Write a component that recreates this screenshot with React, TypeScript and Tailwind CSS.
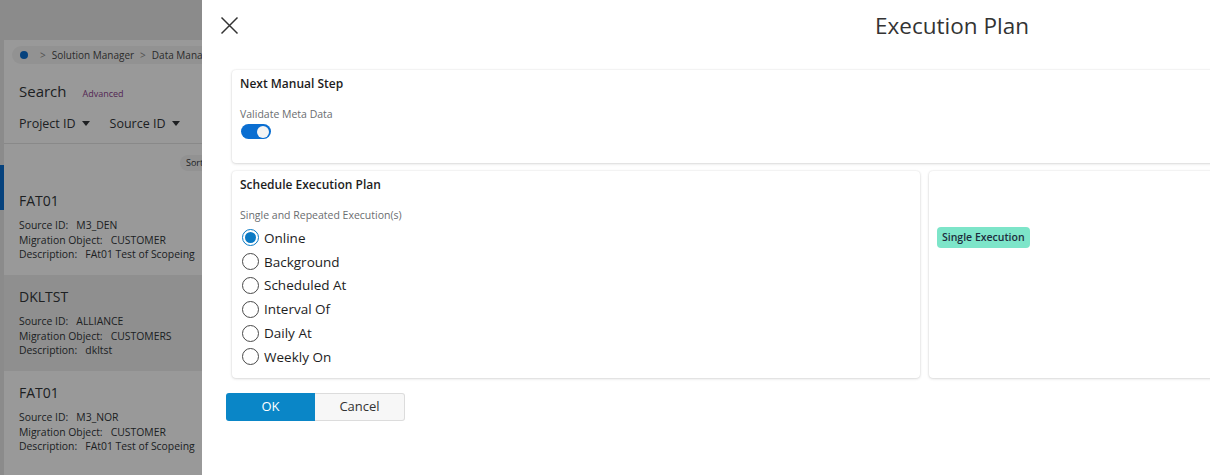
import React from 'react';

const font = { fontFamily: '"Open Sans", "Noto Sans", sans-serif' };

const items = [
  { id: 'FAT01', source: 'M3_DEN', object: 'CUSTOMER', desc: 'FAt01 Test of Scopeing', active: true },
  { id: 'DKLTST', source: 'ALLIANCE', object: 'CUSTOMERS', desc: 'dkltst', selected: true },
  { id: 'FAT01', source: 'M3_NOR', object: 'CUSTOMER', desc: 'FAt01 Test of Scopeing' },
];

const options = ['Online', 'Background', 'Scheduled At', 'Interval Of', 'Daily At', 'Weekly On'];

function Caret() {
  return <span className="ml-[6px] inline-block border-x-[4px] border-t-[5px] border-x-transparent border-t-[#32363a] align-middle" />;
}

function BackgroundPage() {
  return (
    <div className="flex h-full w-full flex-col bg-[#e8e8e8]">
      <div className="h-[40px] shrink-0" />
      <div className="flex min-h-0 flex-1">
        <div className="w-[4px] shrink-0 bg-[#e8e8e8]" />
        <div className="flex-1 bg-white text-[#32363a]">
          {/* breadcrumb */}
          <div className="ml-[8px] mt-[6px] flex h-[18px] items-center gap-[6px] rounded-full bg-[#f4f4f4] pl-[8px] text-[10px] text-[#4a4a4a]">
            <span className="h-[8px] w-[8px] rounded-full bg-[#0a6ed1]" />
            <span className="ml-[6px] text-[#888]">&gt;</span>
            <span>Solution Manager</span>
            <span className="text-[#888]">&gt;</span>
            <span className="whitespace-nowrap">Data Management</span>
          </div>
          <div className="mt-[16px] flex items-baseline gap-[16px] pl-[15px]">
            <span className="text-[15px]">Search</span>
            <span className="text-[9px] text-[#8d3f8d]">Advanced</span>
          </div>
          <div className="mt-[12px] flex items-center gap-[20px] pl-[15px] text-[12.5px]">
            <span className="flex items-center">Project ID<Caret /></span>
            <span className="flex items-center">Source ID<Caret /></span>
          </div>
          <div className="mt-[10px] border-t border-[#e4e4e4]" />
          <div className="relative">
            <span className="absolute left-[176px] top-[11px] rounded-l-full bg-[#f4f4f4] py-[1px] pl-[6px] pr-[10px] text-[9px]">Sort</span>
          </div>
          <div className="pt-[35px]">
            {items.map((it, i) => (
              <div key={i} className={`relative h-[96px] pl-[15px] pt-[12px] ${it.selected ? 'bg-[#eeeeee]' : ''}`}>
                {it.active && <span className="absolute -left-[4px] -top-[14px] h-[45px] w-[4px] bg-[#0a6ed1]" />}
                <div className="text-[14px] leading-[20px]">{it.id}</div>
                <div className="mt-[7px] text-[10.4px] leading-[14.5px]">
                  <div className="whitespace-nowrap">Source ID:&nbsp;&nbsp; {it.source}</div>
                  <div className="whitespace-nowrap">Migration Object:&nbsp;&nbsp; {it.object}</div>
                  <div className="whitespace-nowrap">Description:&nbsp;&nbsp; {it.desc}</div>
                </div>
              </div>
            ))}
          </div>
        </div>
      </div>
    </div>
  );
}

function Radio({ checked }: { checked?: boolean }) {
  if (checked) {
    return (
      <span className="flex h-[17px] w-[17px] shrink-0 items-center justify-center rounded-full border-[1.5px] border-[#0a7ac4] bg-white">
        <span className="h-[11px] w-[11px] rounded-full bg-[#0a7ac4]" />
      </span>
    );
  }
  return <span className="h-[17px] w-[17px] shrink-0 rounded-full border border-[#4a4a4a] bg-white" />;
}

function Card({ children, className = '' }: { children: React.ReactNode; className?: string }) {
  return (
    <div className={`rounded-[4px] bg-white shadow-[0_0_2px_rgba(0,0,0,0.12),0_1px_3px_rgba(0,0,0,0.12)] ${className}`}>
      {children}
    </div>
  );
}

export default function App() {
  return (
    <div className="relative h-[475px] w-[1210px] overflow-hidden" style={font}>
      <BackgroundPage />
      <div className="absolute inset-0 bg-black/40" />

      <div className="absolute left-[202px] top-0 flex h-full w-[1500px] flex-col bg-white px-[24px]">
        <div className="relative flex h-[52px] shrink-0 items-center justify-center">
          <button type="button" className="absolute left-[-6px] top-[16px] text-[#333]">
            <svg width="19" height="19" viewBox="0 0 19 19" fill="none" stroke="currentColor" strokeWidth="1.5">
              <path d="M1.5 1.5 L17.5 17.5 M17.5 1.5 L1.5 17.5" />
            </svg>
          </button>
          <h1 className="text-[22.5px] font-normal leading-[32px] text-[#333]">Execution Plan</h1>
        </div>

        <div className="mt-[18px] px-[6px]">
          <Card className="h-[93px] px-[8px] pt-[5px]">
            <div className="text-[12px] font-semibold leading-[18px] text-[#1d1d1d]">Next Manual Step</div>
            <div className="mt-[13px] text-[10.5px] leading-[16px] text-[#6a6d70]">Validate Meta Data</div>
            <div className="ml-[1px] mt-[2px] flex h-[15px] w-[30px] items-center justify-end rounded-full bg-[#0a6ed1] pr-[2px]">
              <span className="h-[12px] w-[12px] rounded-full bg-[#f4f4f4]" />
            </div>
          </Card>

          <div className="mt-[8px] grid grid-cols-[688px_1fr] gap-[9px]">
            <Card className="h-[207px] px-[8px] pt-[5px]">
              <div className="text-[12px] font-semibold leading-[18px] text-[#1d1d1d]">Schedule Execution Plan</div>
              <div className="mt-[13px] text-[10.5px] leading-[16px] text-[#6a6d70]">Single and Repeated Execution(s)</div>
              <div className="mt-[3px] flex flex-col">
                {options.map((o, i) => (
                  <label key={o} className="flex h-[23.8px] items-center gap-[5px] pl-[2px] text-[13.5px] text-[#1d1d1d]">
                    <Radio checked={i === 0} />
                    <span>{o}</span>
                  </label>
                ))}
              </div>
            </Card>
            <Card className="h-[207px] px-[8px] pt-[52px]">
              <span className="inline-block rounded-[4px] bg-[#7de5c9] px-[5px] py-[2px] text-[10.5px] font-semibold leading-[17px] text-[#1d2d3e]">
                Single Execution
              </span>
            </Card>
          </div>
        </div>

        <div className="mt-[15px] flex">
          <button type="button" className="h-[28px] w-[89px] rounded-l-[3px] bg-[#0a86c7] text-[13px] text-white">OK</button>
          <button type="button" className="h-[28px] w-[90px] rounded-r-[3px] border border-l-0 border-[#dcdcdc] bg-[#f7f7f7] text-[13px] text-[#333]">Cancel</button>
        </div>
      </div>
    </div>
  );
}
